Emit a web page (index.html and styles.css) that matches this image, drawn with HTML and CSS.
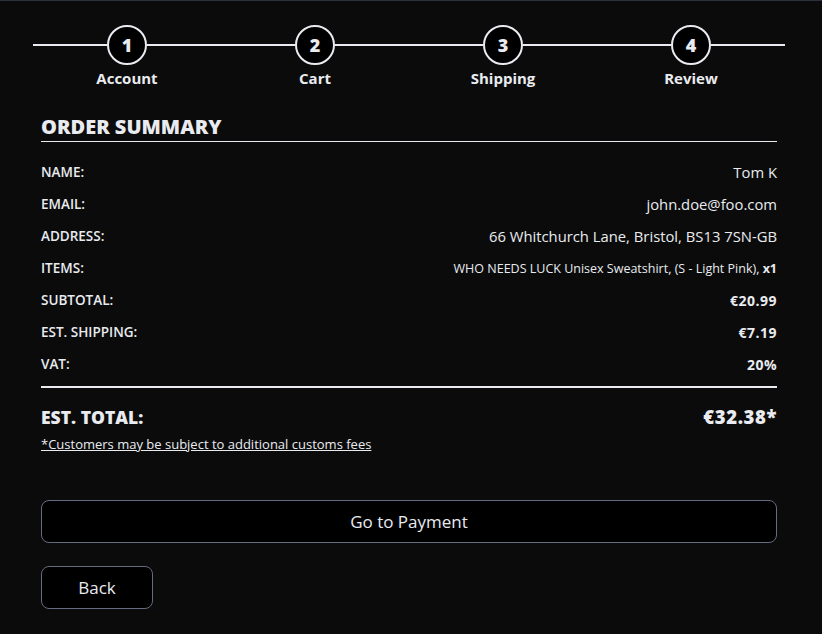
FILE: index.html
```html
<!DOCTYPE html>
<html lang="en">
<head>
<meta charset="utf-8">
<title>Order Summary</title>
<link rel="stylesheet" href="styles.css">
</head>
<body>
<div class="page">
  <div class="stepper">
    <div class="step">
      <div class="track"><span class="line"></span><span class="circle">1</span><span class="line"></span></div>
      <div class="label">Account</div>
    </div>
    <div class="step">
      <div class="track"><span class="line"></span><span class="circle">2</span><span class="line"></span></div>
      <div class="label">Cart</div>
    </div>
    <div class="step">
      <div class="track"><span class="line"></span><span class="circle">3</span><span class="line"></span></div>
      <div class="label">Shipping</div>
    </div>
    <div class="step">
      <div class="track"><span class="line"></span><span class="circle">4</span><span class="line"></span></div>
      <div class="label">Review</div>
    </div>
  </div>

  <div class="content">
    <h2 class="title">ORDER SUMMARY</h2>
    <div class="rows">
      <div class="row"><span class="key">NAME:</span><span class="val">Tom K</span></div>
      <div class="row"><span class="key">EMAIL:</span><span class="val">john.doe@foo.com</span></div>
      <div class="row"><span class="key">ADDRESS:</span><span class="val">66 Whitchurch Lane, Bristol, BS13 7SN-GB</span></div>
      <div class="row"><span class="key">ITEMS:</span><span class="val small">WHO NEEDS LUCK Unisex Sweatshirt, (S - Light Pink), <b>x1</b></span></div>
      <div class="row"><span class="key">SUBTOTAL:</span><span class="val strong">€20.99</span></div>
      <div class="row"><span class="key">EST. SHIPPING:</span><span class="val strong">€7.19</span></div>
      <div class="row"><span class="key">VAT:</span><span class="val strong">20%</span></div>
    </div>
    <div class="total">
      <span>EST. TOTAL:</span><span class="total-val">€32.38*</span>
    </div>
    <a class="note" href="#">*Customers may be subject to additional customs fees</a>

    <button class="btn btn-wide">Go to Payment</button>
    <button class="btn btn-back">Back</button>
  </div>
</div>
</body>
</html>
```
FILE: styles.css
```css
* { box-sizing: border-box; }
html, body { margin: 0; padding: 0; }
body {
  background: #0b0b0b;
  border-top: 1px solid #2a303c;
  color: #e9ebf0;
  font-family: "Open Sans", "DejaVu Sans", sans-serif;
  height: 634px;
  overflow: hidden;
}
.page {
  width: 752px;
  margin-left: 33px;
  padding-top: 24px;
}
.stepper {
  display: grid;
  grid-template-columns: repeat(4, 1fr);
}
.step {
  display: flex;
  flex-direction: column;
  align-items: center;
}
.track {
  display: flex;
  align-items: center;
  width: 100%;
}
.line {
  flex: 1;
  height: 2px;
  background: #e9ebf0;
}
.circle {
  width: 40px;
  height: 40px;
  border: 2px solid #e9ebf0;
  border-radius: 50%;
  background: #000;
  display: flex;
  align-items: center;
  justify-content: center;
  font-weight: 800;
  font-size: 18px;
}
.label {
  margin-top: 3px;
  font-size: 15px;
  font-weight: 700;
  line-height: 20px;
}
.content {
  padding: 0 8px;
}
.title {
  margin: 26px 0 0;
  font-size: 20px;
  font-weight: 800;
  line-height: 26px;
  padding-bottom: 1px;
  border-bottom: 1px solid #e9ebf0;
}
.rows {
  padding-top: 14px;
  padding-bottom: 6px;
  border-bottom: 2px solid #e9ebf0;
}
.row {
  display: flex;
  justify-content: space-between;
  align-items: center;
  height: 32px;
}
.key {
  font-size: 13.5px;
  font-weight: 600;
}
.val {
  font-size: 14.8px;
}
.val.small {
  font-size: 12.5px;
  font-weight: 500;
}
.val.strong {
  font-size: 14px;
  font-weight: 700;
  letter-spacing: 0.5px;
}
.total {
  display: flex;
  justify-content: space-between;
  align-items: center;
  margin-top: 17px;
  font-size: 17.5px;
  font-weight: 800;
  line-height: 24px;
}
.total-val {
  font-size: 18.5px;
  letter-spacing: 0.6px;
}
.note {
  display: block;
  margin-top: 6px;
  color: #e9ebf0;
  font-size: 13px;
  line-height: 18px;
  text-decoration: underline;
}
.btn {
  display: block;
  height: 43px;
  background: #000;
  color: #e9ebf0;
  border: 1px solid #656c80;
  border-radius: 8px;
  font-family: inherit;
  font-size: 17px;
}
.btn-wide {
  width: 100%;
  margin-top: 47px;
}
.btn-back {
  width: 112px;
  margin-top: 23px;
}
```
